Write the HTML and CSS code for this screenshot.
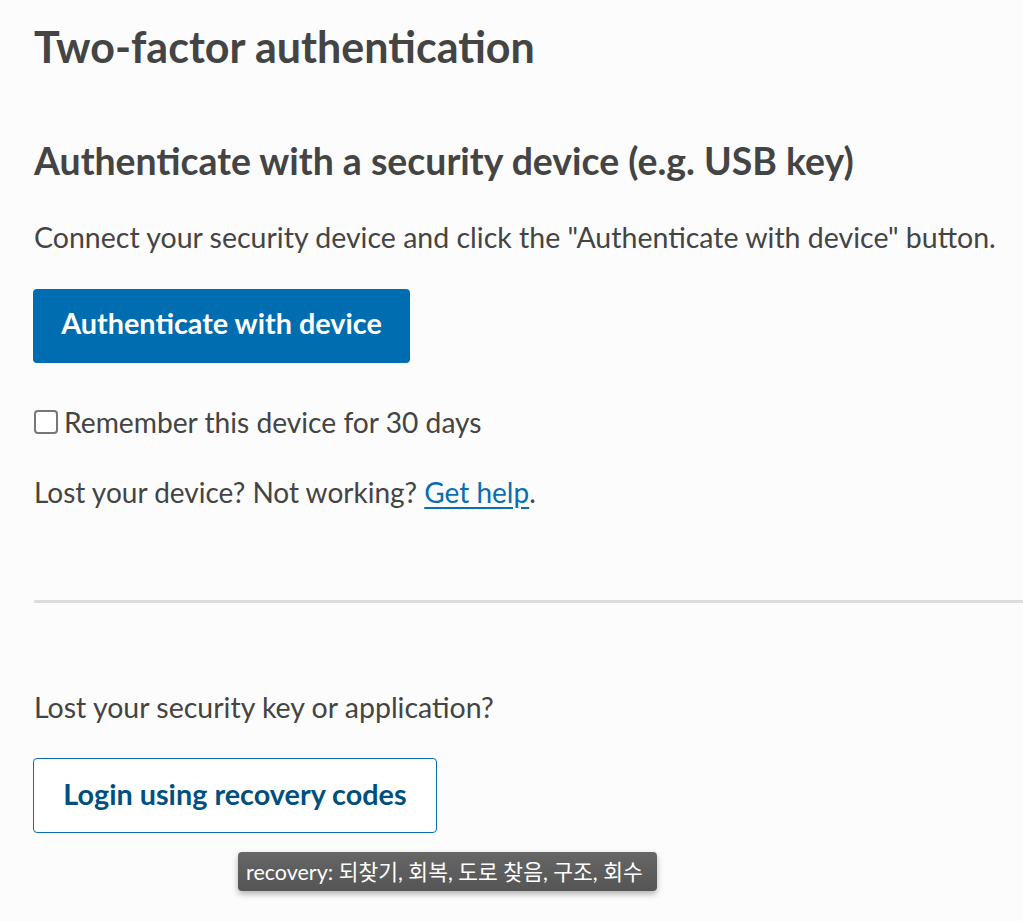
FILE: index.html
```html
<!DOCTYPE html>
<html lang="en">
<head>
<meta charset="utf-8">
<title>Two-factor authentication</title>
<link rel="stylesheet" href="styles.css">
</head>
<body>
<main class="page">
  <h1 class="title">Two-factor authentication</h1>
  <section class="device">
    <h2 class="subtitle">Authenticate with a security device (e.g. USB key)</h2>
    <p class="text">Connect your security device and click the "Authenticate with device" button.</p>
    <button class="btn btn-primary" type="button">Authenticate with device</button>
    <label class="remember"><input class="check" type="checkbox"><span>Remember this device for 30 days</span></label>
    <p class="text help">Lost your device? Not working? <a class="link" href="#">Get help</a>.</p>
  </section>
  <hr class="divider">
  <section class="recovery">
    <p class="text">Lost your security key or application?</p>
    <div class="recovery-action">
      <button class="btn btn-outline" type="button">Login using recovery codes</button>
      <div class="tooltip">recovery: 되찾기, 회복, 도로 찾음, 구조, 회수</div>
    </div>
  </section>
</main>
</body>
</html>
```

FILE: styles.css
```css
html, body {
  margin: 0;
  padding: 0;
  background: #fcfcfc;
}
body {
  font-family: "Lato", "Noto Sans CJK KR", sans-serif;
  color: #444444;
  min-height: 921px;
}
.page {
  padding: 21px 0 0 34px;
}
.title {
  margin: 0;
  font-size: 43px;
  font-weight: 700;
  line-height: 52px;
}
.device {
  margin-top: 66px;
}
.subtitle {
  margin: 0;
  font-size: 37.4px;
  font-weight: 700;
  line-height: 44px;
}
.text {
  margin: 0;
  font-size: 28.5px;
  line-height: 36px;
}
.device .text {
  margin-top: 36px;
}
.btn {
  font-family: inherit;
  font-size: 28.8px;
  font-weight: 700;
  border-radius: 4px;
  cursor: pointer;
  box-sizing: border-box;
  padding: 0 0 6px 0;
  text-align: center;
}
.btn-primary {
  display: block;
  margin: 34px 0 0 -1px;
  height: 74px;
  width: 377px;
  background: #006db0;
  color: #ffffff;
  border: none;
}
.remember {
  display: flex;
  align-items: center;
  gap: 6px;
  margin-top: 41px;
  font-size: 28.2px;
  line-height: 36px;
}
.check {
  appearance: none;
  margin: 0;
  width: 24px;
  height: 24px;
  border: 2px solid #777777;
  border-radius: 4px;
  background: #ffffff;
}
.device .help {
  margin-top: 34px;
  font-size: 28px;
}
.link {
  color: #0a6eb0;
  text-decoration: underline;
  text-underline-offset: 4px;
}
.divider {
  margin: 90px 0 0 0;
  border: none;
  height: 3px;
  background: #dddddd;
}
.recovery {
  margin-top: 86px;
}
.recovery-action {
  position: relative;
  margin-top: 33px;
}
.btn-outline {
  display: block;
  margin-left: -1px;
  height: 75px;
  width: 404px;
  background: #ffffff;
  color: #00507f;
  border: 1px solid #0a6eb0;
  padding-bottom: 4px;
}
.tooltip {
  position: absolute;
  z-index: 5;
  left: 204px;
  top: 94px;
  height: 39px;
  width: 419px;
  box-sizing: border-box;
  padding: 0 8px 2px 8px;
  display: flex;
  align-items: center;
  white-space: nowrap;
  background: linear-gradient(#666666, #555555);
  color: #ffffff;
  font-size: 21.5px;
  border-radius: 4px;
  box-shadow: 0 3px 6px rgba(0, 0, 0, 0.3);
}
```
